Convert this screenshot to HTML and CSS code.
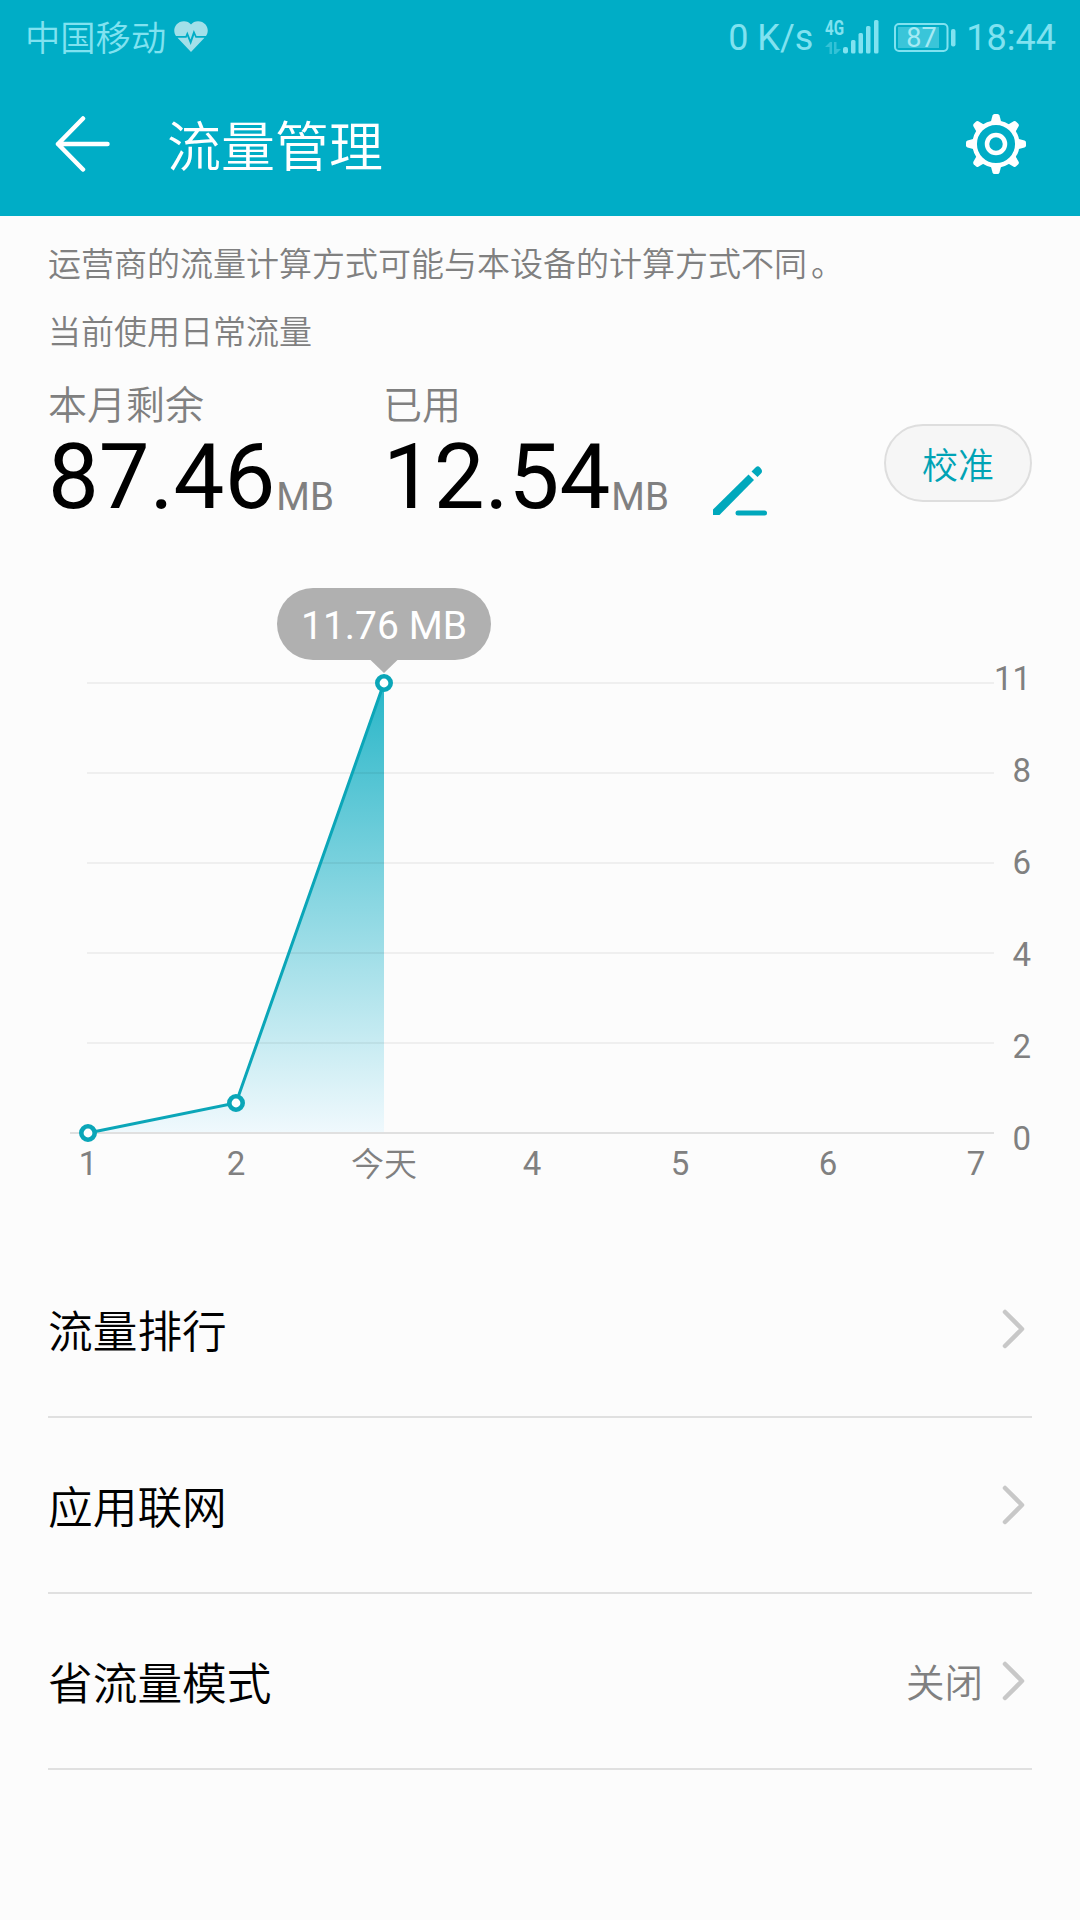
FILE: index.html
```html
<!DOCTYPE html>
<html lang="zh-CN">
<head>
    <meta charset="UTF-8">
    <meta name="viewport" content="width=device-width, initial-scale=1.0">
    <title>流量管理</title>
    <link rel="stylesheet" href="styles.css">
</head>
<body>

<header class="header">
    <div class="status-bar">
        <span class="carrier">中国移动</span>
        <svg class="heart" width="34" height="32" viewBox="0 0 34 32">
            <path d="M17 3.500C14-1 6-1 2.500 3.500C-.5 7-.3 12 2 15H11.500L13.300 10.500L16.500 18.500L19.800 9L22.500 15H32C34.300 12 34.500 7 31.500 3.500C28-1 20-1 17 3.500Z"/>
            <path d="M3.500 16.700H12.500L13.200 15.200L16.700 24L20.200 14L21.500 16.700H30.500L17 31Z"/>
        </svg>
        <span class="speed">0 K/s</span>
        <svg class="signal" width="54" height="38" viewBox="0 0 54 38">
            <text class="network" x="0" y="17" textLength="19" lengthAdjust="spacingAndGlyphs">4G</text>
            <path class="arrows" d="M0 29L5 24H7V36H4.500V29ZM9 24H11.500V31H16L11 36H9Z"/>
            <g>
                <rect x="18" y="29" width="5" height="6.500" rx="2"/>
                <rect x="26" y="22" width="4.500" height="13.500" rx="1.500"/>
                <rect x="33.500" y="15" width="4.500" height="20.500" rx="1.500"/>
                <rect x="41" y="8" width="4.500" height="27.500" rx="1.500"/>
                <rect x="49" y="2" width="4.500" height="33.500" rx="1.500"/>
            </g>
        </svg>
        <svg class="battery" width="62" height="30" viewBox="0 0 62 30">
            <rect class="battery-frame" x="1" y="1" width="52.500" height="27" rx="4"/>
            <rect class="battery-level" x="4" y="4" width="41" height="21"/>
            <rect x="57" y="6" width="4.500" height="17.500" rx="2"/>
            <text class="battery-text" x="27.500" y="24" text-anchor="middle">87</text>
        </svg>
        <span class="time">18:44</span>
    </div>
    <div class="title-bar">
        <svg class="back" width="56" height="56" viewBox="0 0 56 56">
            <path d="M28 2.500L3 28L28 53.500M3 28H52.500"/>
        </svg>
        <h1>流量管理</h1>
        <svg class="gear" width="60" height="60" viewBox="-30 -30 60 60">
            <defs>
                <path id="tooth" d="M-5.500-21L-3.500-28.500Q-3-30-1.500-30H1.500Q3-30 3.500-28.500L5.500-21Z"/>
            </defs>
            <circle r="21.300"/>
            <circle r="9"/>
            <use href="#tooth"/>
            <use href="#tooth" transform="rotate(45)"/>
            <use href="#tooth" transform="rotate(90)"/>
            <use href="#tooth" transform="rotate(135)"/>
            <use href="#tooth" transform="rotate(180)"/>
            <use href="#tooth" transform="rotate(225)"/>
            <use href="#tooth" transform="rotate(270)"/>
            <use href="#tooth" transform="rotate(315)"/>
        </svg>
    </div>
</header>

<main>
    <p class="note">运营商的流量计算方式可能与本设备的计算方式不同<span class="stop">。</span></p>
    <p class="note">当前使用日常流量</p>

    <section class="usage">
        <div class="usage-item">
            <div class="label">本月剩余</div>
            <div class="value">87.46<span class="unit">MB</span></div>
        </div>
        <div class="usage-item">
            <div class="label">已用</div>
            <div class="value">12.54<span class="unit">MB</span></div>
        </div>
        <svg class="edit" width="56" height="52" viewBox="0 0 56 52">
            <path d="M1 50V44.500L36.500 9.500L42 15L7.500 50Z"/>
            <path d="M39.500 6.500L43 3Q45.500 0 48 2.500Q51.500 6 49 8.500L45.500 12Z"/>
            <path class="edit-line" d="M26 48H52.500"/>
        </svg>
        <button class="calibrate">校准</button>
    </section>

    <!-- Daily usage chart -->
    <svg class="chart" width="1080" height="620" viewBox="0 570 1080 620">
        <defs>
            <linearGradient id="fill" x1="0" y1="683" x2="0" y2="1133" gradientUnits="userSpaceOnUse">
                <stop offset="0" stop-color="#29b6c8"/>
                <stop offset="1" stop-color="#f0f9fd"/>
            </linearGradient>
        </defs>
        <path class="area" d="M88 1133L236 1103L384 683V1133Z"/>
        <path class="grid" d="M87 683H994M87 773H994M87 863H994M87 953H994M87 1043H994"/>
        <path class="axis" d="M70 1133H994"/>
        <path class="line" d="M88 1133L236 1103L384 683"/>
        <g class="points">
            <circle cx="88" cy="1133" r="6.700"/>
            <circle cx="236" cy="1103" r="6.700"/>
            <circle cx="384" cy="683" r="6.700"/>
        </g>
        <g class="y-labels">
            <text x="1031" y="690">11</text>
            <text x="1031" y="782">8</text>
            <text x="1031" y="874">6</text>
            <text x="1031" y="966">4</text>
            <text x="1031" y="1058">2</text>
            <text x="1031" y="1150">0</text>
        </g>
        <g class="x-labels">
            <text x="88" y="1175">1</text>
            <text x="236" y="1175">2</text>
            <text class="today" x="384" y="1176">今天</text>
            <text x="532" y="1175">4</text>
            <text x="680" y="1175">5</text>
            <text x="828" y="1175">6</text>
            <text x="976" y="1175">7</text>
        </g>
        <g class="tooltip">
            <rect x="277" y="588" width="214" height="72" rx="36"/>
            <path d="M370 659.500H398L384 673Z"/>
            <text x="384" y="639">11.76 MB</text>
        </g>
    </svg>

    <ul class="menu">
        <li>
            <span class="name">流量排行</span>
            <svg class="chevron" width="24" height="40" viewBox="0 0 24 40"><path d="M3 3L20 20L3 37"/></svg>
        </li>
        <li>
            <span class="name">应用联网</span>
            <svg class="chevron" width="24" height="40" viewBox="0 0 24 40"><path d="M3 3L20 20L3 37"/></svg>
        </li>
        <li>
            <span class="name">省流量模式</span>
            <span class="state">关闭</span>
            <svg class="chevron" width="24" height="40" viewBox="0 0 24 40"><path d="M3 3L20 20L3 37"/></svg>
        </li>
    </ul>
</main>

</body>
</html>
```
FILE: styles.css
```css
* {
    box-sizing: border-box;
}

body {
    margin: 0;
    min-height: 1920px;
    background-color: #fcfcfc;
    color: #000;
    font-family: Roboto, "Noto Sans CJK SC", sans-serif;
}

/* Header */
.header {
    height: 216px;
    background-color: #00adc6;
}

.status-bar {
    display: flex;
    align-items: center;
    height: 72px;
    padding: 4px 24px 0 25px;
    color: #80e2f0;
    fill: #80e2f0;
    font-size: 36px;
    line-height: 68px;
}

.carrier {
    padding-top: 2px;
    font-size: 35.3px;
    font-weight: 350;
}

.heart {
    margin: 0 0 3px 8px;
    fill: #a2e0e9;
}

.speed {
    margin-left: auto;
}

.signal {
    margin: 0 0 3px 12px;
    overflow: visible;
}

.network {
    font-size: 21px;
    font-weight: 700;
}

.arrows {
    opacity: 0.4;
}

.battery {
    margin: 0 0 1px 15px;
}

.battery-frame {
    fill: none;
    stroke: #80e2f0;
    stroke-width: 2;
}

.battery-level {
    opacity: 0.45;
}

.battery-text {
    fill: #a5eaf4;
    font-size: 27px;
}

.time {
    margin-left: 10px;
}

.title-bar {
    display: flex;
    align-items: center;
    height: 144px;
    padding: 0 54px 0 55px;
    color: #fff;
}

.back {
    fill: none;
    stroke: #fff;
    stroke-width: 4.5;
    stroke-linecap: round;
    stroke-linejoin: round;
}

.title-bar h1 {
    margin: 0 0 1px 56px;
    font-size: 54px;
    font-weight: 350;
}

.gear {
    margin-left: auto;
    fill: #fff;
}

.gear circle {
    fill: none;
    stroke: #fff;
    stroke-width: 4.5;
}

/* Usage */
.note {
    height: 68px;
    margin: 0 48px;
    color: #808080;
    font-size: 33px;
    font-weight: 350;
    line-height: 68px;
}

.note:first-child {
    padding-top: 15px;
    height: 83px;
}

.stop {
    margin-left: 4px;
}

.usage {
    display: flex;
    height: 203px;
    padding: 0 48px;
}

.usage-item {
    width: 335px;
    padding-top: 13px;
}

.label {
    height: 52px;
    color: #808080;
    font-size: 39px;
    font-weight: 350;
    line-height: 52px;
}

.value {
    font-size: 90.5px;
    line-height: 90px;
    white-space: nowrap;
}

.unit {
    position: relative;
    top: 2px;
    margin-left: 1px;
    color: #808080;
    font-size: 38.5px;
}

.edit {
    margin: 98px 0 0 -6px;
    fill: #00a8bc;
}

.edit-line {
    stroke: #00a8bc;
    stroke-width: 5;
    stroke-linecap: round;
}

.calibrate {
    width: 148px;
    height: 78px;
    margin: 57px 0 0 auto;
    padding: 0;
    background-color: #f6f6f6;
    color: #00a3b5;
    border: 2px solid #dedede;
    border-radius: 39px;
    font-family: inherit;
    font-size: 36px;
    font-weight: 350;
}

/* Chart */
.chart {
    display: block;
}

.chart path {
    fill: none;
    stroke-width: 2;
}

.chart .area {
    fill: url(#fill);
}

.chart .grid {
    stroke: #000;
    stroke-opacity: 0.05;
}

.chart .axis {
    stroke: #e0e0e0;
}

.chart .line {
    stroke: #0ba6b8;
    stroke-width: 3;
}

.points circle {
    fill: #fff;
    stroke: #0ba6b8;
    stroke-width: 4.6;
}

.y-labels, .x-labels {
    fill: #808080;
    font-size: 33px;
}

.y-labels {
    text-anchor: end;
}

.x-labels {
    text-anchor: middle;
}

.today {
    font-weight: 350;
}

.tooltip, .chart .tooltip path {
    fill: #b0b0b0;
}

.tooltip text {
    fill: #fff;
    font-size: 39px;
    text-anchor: middle;
}

/* Menu */
.menu {
    margin: 52px 48px 0;
    padding: 0;
    list-style: none;
}

.menu li {
    display: flex;
    align-items: center;
    height: 176px;
    border-bottom: 2px solid #e0e0e0;
}

.name {
    padding-bottom: 2px;
    font-size: 44.7px;
    font-weight: 350;
}

.chevron {
    margin-left: auto;
    margin-right: 6px;
    fill: none;
    stroke: #c8c8c8;
    stroke-width: 4.5;
    stroke-linecap: round;
    stroke-linejoin: round;
}

.state {
    margin-left: auto;
    padding-bottom: 2px;
    color: #808080;
    font-size: 38.5px;
    font-weight: 350;
}

.state + .chevron {
    margin-left: 19px;
}
```
